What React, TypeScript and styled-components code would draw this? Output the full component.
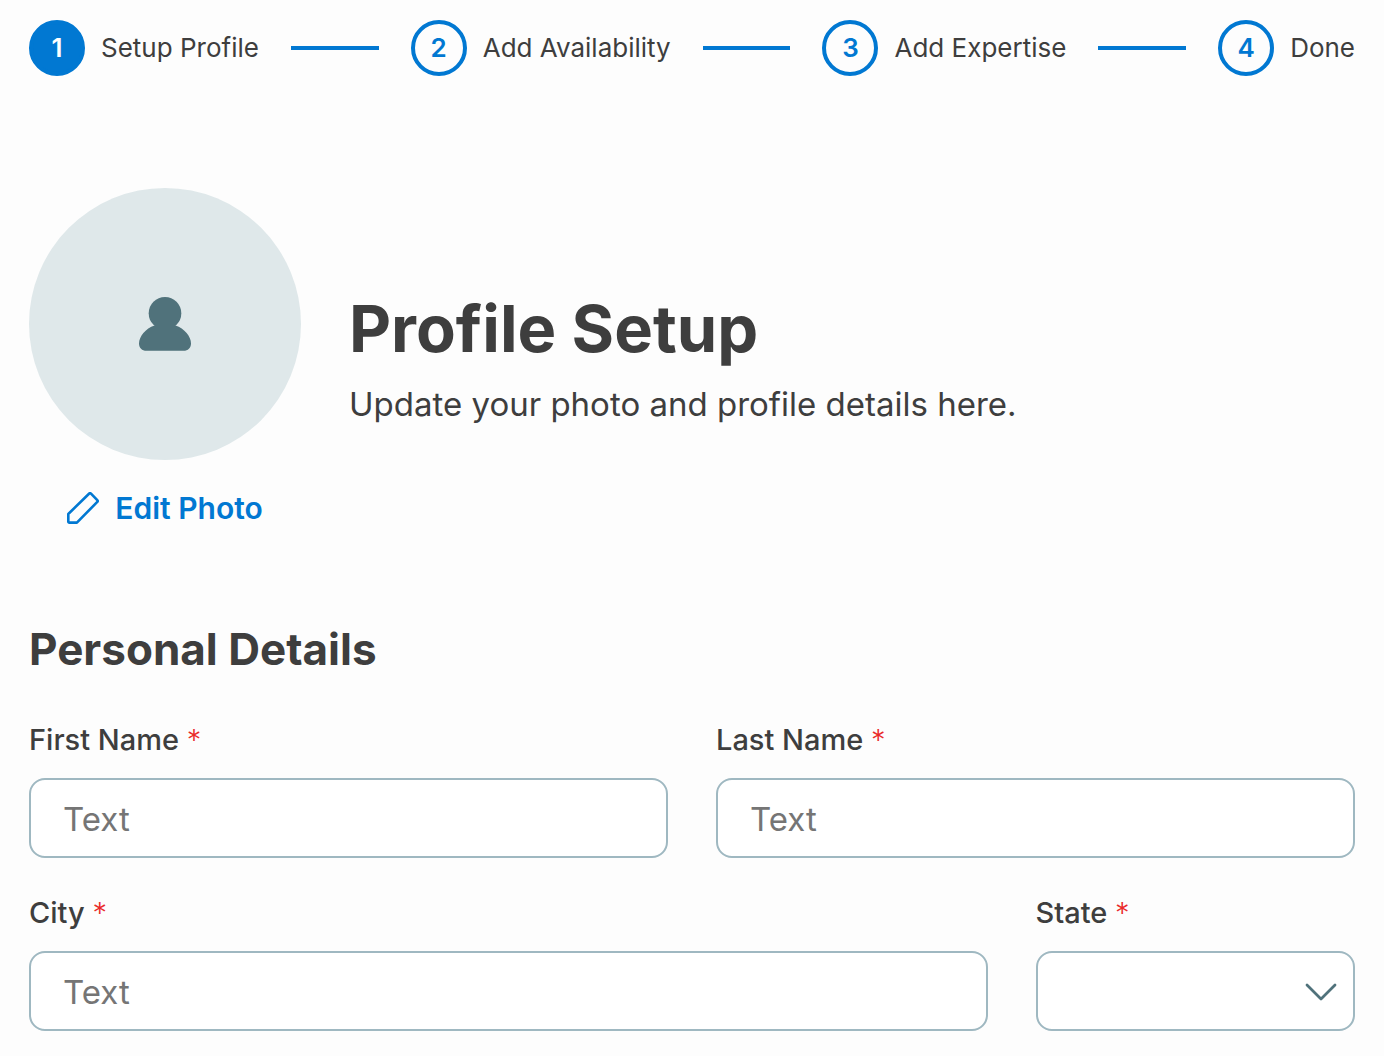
import React, { useId } from 'react';
import styled, { createGlobalStyle, css } from 'styled-components';

const color = {
  page: '#fdfdfd',
  white: '#ffffff',
  primary: '#0178d2',
  text: '#3e3e3e',
  placeholder: '#757575',
  required: '#ea2a2a',
  border: '#9fb8c1',
  icon: '#50727b',
  avatar: '#dfe8ea',
};

const GlobalStyle = createGlobalStyle`
  *, *::before, *::after { box-sizing: border-box; }
  body {
    margin: 0;
    background: ${color.page};
    color: ${color.text};
    font-family: Inter, "Liberation Sans", sans-serif;
  }
`;

const Page = styled.main`
  padding: 20px 29px 25px;
`;

const Steps = styled.ol`
  display: flex;
  align-items: center;
  gap: 32px;
  margin: 0 0 112px;
  padding: 0;
  list-style: none;
`;

const Step = styled.li`
  display: flex;
  align-items: center;
  gap: 16px;
  font-size: 26px;
  line-height: 40px;
  white-space: nowrap;
`;

const StepNumber = styled.span<{ $current: boolean }>`
  display: grid;
  place-items: center;
  width: 56px;
  height: 56px;
  border: 4px solid ${color.primary};
  border-radius: 50%;
  color: ${color.primary};
  font-weight: 600;
  ${(p) =>
    p.$current &&
    css`
      background: ${color.primary};
      color: ${color.white};
    `}
`;

const Connector = styled.li`
  flex: 1;
  height: 4px;
  background: ${color.primary};
`;

const ProfileHeader = styled.header`
  display: flex;
  align-items: center;
  gap: 48px;
  margin-bottom: 93px;
`;

const PhotoColumn = styled.div`
  display: flex;
  flex-direction: column;
  align-items: center;
  gap: 28px;
`;

const Avatar = styled.div`
  display: grid;
  place-items: center;
  width: 272px;
  height: 272px;
  border-radius: 50%;
  background: ${color.avatar};
  color: ${color.icon};
`;

const EditButton = styled.button`
  display: flex;
  align-items: center;
  gap: 16px;
  padding: 0;
  border: 0;
  background: none;
  color: ${color.primary};
  font: inherit;
  font-size: 30px;
  font-weight: 600;
  line-height: 40px;
  cursor: pointer;
`;

const Intro = styled.div`
  display: flex;
  flex-direction: column;
  gap: 11px;
`;

const Title = styled.h1`
  margin: 0;
  font-size: 65px;
  font-weight: 700;
  line-height: 80px;
`;

const Subtitle = styled.p`
  margin: 0;
  font-size: 33px;
  line-height: 48px;
`;

const SectionTitle = styled.h2`
  margin: 0 0 43px;
  font-size: 44px;
  font-weight: 700;
  line-height: 56px;
`;

const Form = styled.form`
  display: flex;
  flex-direction: column;
  gap: 35px;
`;

const FieldRow = styled.div<{ $columns: string }>`
  display: grid;
  grid-template-columns: ${(p) => p.$columns};
  gap: 48px;
`;

const Field = styled.div`
  display: flex;
  flex-direction: column;
  gap: 18px;
  min-width: 0;
`;

const Label = styled.label`
  font-size: 29px;
  font-weight: 500;
  line-height: 40px;
`;

const Required = styled.span`
  color: ${color.required};
  font-weight: 300;
`;

const control = css`
  width: 100%;
  height: 80px;
  padding: 2px 32px 0;
  border: 2px solid ${color.border};
  border-radius: 16px;
  background: ${color.white};
  color: ${color.text};
  font: inherit;
  font-size: 33px;
`;

const Input = styled.input`
  ${control}
  &::placeholder {
    color: ${color.placeholder};
    opacity: 1;
  }
`;

const SelectBox = styled.div`
  display: grid;
  align-items: center;
  color: ${color.icon};
  & > * {
    grid-area: 1 / 1;
  }
  & > svg {
    justify-self: end;
    margin: 2px 18px 0 0;
    pointer-events: none;
  }
`;

const Select = styled.select`
  ${control}
  appearance: none;
`;

const UserIcon = () => (
  <svg width="54" height="54" viewBox="0 0 54 54" fill="currentColor" aria-hidden="true">
    <circle cx="27" cy="16.3" r="16.3" />
    <path d="M16.500 28.500C7.500 31.500 1 39.500 1 46.500C1 51 4 53.800 8.500 53.800H45.500C50 53.800 53 51 53 46.500C53 39.500 46.500 31.500 37.500 28.500L27 20Z" />
  </svg>
);

const PencilIcon = () => (
  <svg
    width="32"
    height="32"
    viewBox="0 0 32 32"
    fill="none"
    stroke="currentColor"
    strokeWidth="2.6"
    strokeLinejoin="round"
    aria-hidden="true"
  >
    <path d="M1.300 22L22 1.700Q23 .8 24 1.700L30.300 8.100Q31.200 9 30.300 9.900L9.900 30.600H2.400Q1.300 30.600 1.300 29.500Z" />
  </svg>
);

const ChevronIcon = () => (
  <svg
    width="32"
    height="18"
    viewBox="0 0 32 18"
    fill="none"
    stroke="currentColor"
    strokeWidth="2.800"
    strokeLinecap="round"
    strokeLinejoin="round"
    aria-hidden="true"
  >
    <path d="M2 2L16 16L30 2" />
  </svg>
);

const FieldLabel = ({ id, children }: { id: string; children: string }) => (
  <Label htmlFor={id}>
    {children} <Required>*</Required>
  </Label>
);

const TextField = ({ label }: { label: string }) => {
  const id = useId();
  return (
    <Field>
      <FieldLabel id={id}>{label}</FieldLabel>
      <Input id={id} type="text" placeholder="Text" required />
    </Field>
  );
};

const SelectField = ({ label }: { label: string }) => {
  const id = useId();
  return (
    <Field>
      <FieldLabel id={id}>{label}</FieldLabel>
      <SelectBox>
        <Select id={id} required defaultValue="">
          <option value="" />
        </Select>
        <ChevronIcon />
      </SelectBox>
    </Field>
  );
};

const steps = ['Setup Profile', 'Add Availability', 'Add Expertise', 'Done'];

export default function App() {
  return (
    <>
      <GlobalStyle />
      <Page>
        <Steps>
          {steps.map((label, index) => (
            <React.Fragment key={label}>
              {index > 0 && <Connector aria-hidden="true" />}
              <Step aria-current={index === 0 ? 'step' : undefined}>
                <StepNumber $current={index === 0}>{index + 1}</StepNumber>
                {label}
              </Step>
            </React.Fragment>
          ))}
        </Steps>

        <ProfileHeader>
          <PhotoColumn>
            <Avatar>
              <UserIcon />
            </Avatar>
            <EditButton type="button">
              <PencilIcon />
              Edit Photo
            </EditButton>
          </PhotoColumn>
          <Intro>
            <Title>Profile Setup</Title>
            <Subtitle>Update your photo and profile details here.</Subtitle>
          </Intro>
        </ProfileHeader>

        <SectionTitle>Personal Details</SectionTitle>
        <Form>
          <FieldRow $columns="1fr 1fr">
            <TextField label="First Name" />
            <TextField label="Last Name" />
          </FieldRow>
          <FieldRow $columns="3fr 1fr">
            <TextField label="City" />
            <SelectField label="State" />
          </FieldRow>
        </Form>
      </Page>
    </>
  );
}
